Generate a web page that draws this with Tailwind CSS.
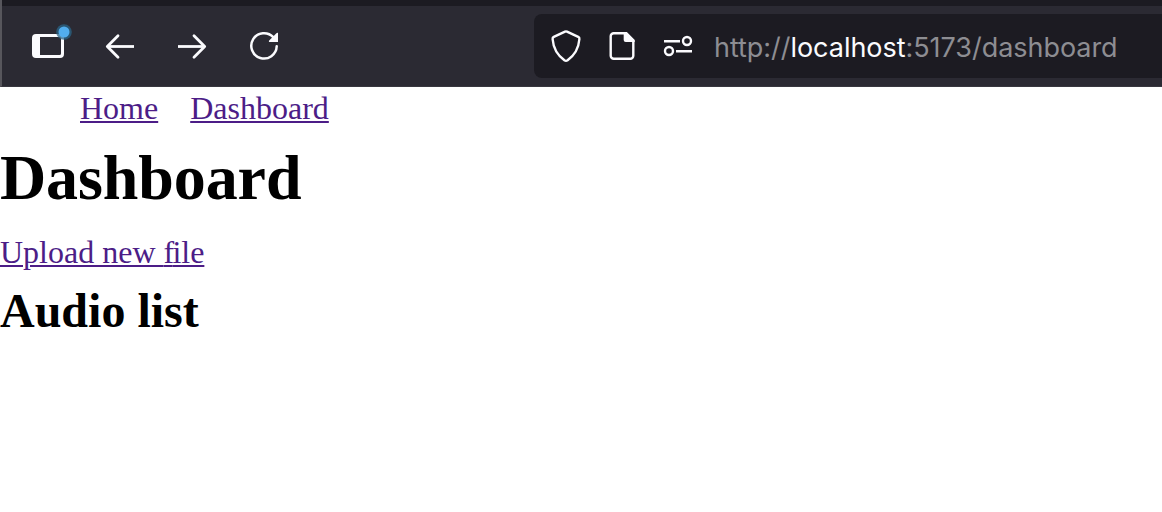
<!DOCTYPE html>
<html lang="en">
<head>
<meta charset="utf-8">
<title>Dashboard</title>
<script src="https://cdn.jsdelivr.net/npm/@tailwindcss/browser@4"></script>
</head>
<body class="h-[512px] w-[1162px] overflow-hidden bg-white">
<header class="h-[87px] border-b border-[#38373f] border-l-2 border-l-[#57565c] bg-[#2b2a33]">
  <div class="h-1.5 bg-[#1c1b22]"></div>
  <div class="flex h-20 items-center">
    <nav class="flex w-[532px] items-center gap-8 pl-[26px]">
      <svg class="h-10 w-10 overflow-visible" viewBox="0 0 40 40" fill="none">
        <path fill="#fbfbfe" fill-rule="evenodd" d="M8 8h24a4 4 0 0 1 4 4v16a4 4 0 0 1-4 4H8a4 4 0 0 1-4-4V12a4 4 0 0 1 4-4ZM12 11v18h19.500a1.500 1.500 0 0 0 1.500-1.500V12.500a1.500 1.500 0 0 0-1.500-1.500Z"/>
        <circle cx="36" cy="6" r="7.800" fill="#2b6487" fill-opacity=".75"/>
        <circle cx="36" cy="6" r="5.500" fill="#52aeef"/>
      </svg>
      <svg class="h-10 w-10" viewBox="0 0 40 40" fill="none" stroke="#fbfbfe" stroke-width="2.800" stroke-linecap="round" stroke-linejoin="round"><path stroke-linecap="butt" d="M34 20.500H8"/><path d="M18 9.800 7.300 20.500 18 31.200"/></svg>
      <svg class="h-10 w-10" viewBox="0 0 40 40" fill="none" stroke="#fbfbfe" stroke-width="2.800" stroke-linecap="round" stroke-linejoin="round"><path stroke-linecap="butt" d="M6 20.500h26"/><path d="m22 9.800 10.700 10.700L22 31.200"/></svg>
      <svg class="h-10 w-10" viewBox="0 0 40 40" fill="none"><path stroke="#fbfbfe" stroke-width="2.500" stroke-linecap="round" d="M32.700 20.300A12.700 12.700 0 1 1 29.300 11.200"/><path fill="#fbfbfe" d="M34 7v9h-8.200c-.9 0-1.300-1-.6-1.600l7.200-7.200c.6-.6 1.600-.8 1.600-.2Z"/></svg>
    </nav>
    <div class="flex h-16 flex-1 items-center rounded-l-lg bg-[#1c1b22] pl-3">
      <svg class="h-10 w-10 shrink-0" viewBox="0 0 40 40" fill="none" stroke="#fbfbfe" stroke-width="2.400" stroke-linejoin="round"><path d="M19 5.600c.6-.3 1.400-.3 2 0l11.200 5.300c.8.400 1.300 1.200 1.200 2.100C32.800 21 29.500 28.500 21.600 34.300c-1 .7-2.200.7-3.200 0C10.500 28.500 7.200 21 6.600 13c-.1-.9.400-1.700 1.200-2.100Z"/></svg>
      <svg class="ml-4 h-10 w-10 shrink-0" viewBox="0 0 40 40" fill="none"><path stroke="#fbfbfe" stroke-width="2.400" stroke-linejoin="round" d="M23 7.200H12.200a3 3 0 0 0-3 3v19.600a3 3 0 0 0 3 3h16.600a3 3 0 0 0 3-3V14.500L24.500 7.200Z" transform="translate(-.5 0)"/><path fill="#fbfbfe" d="M22 6h3L33 14v2H24a2 2 0 0 1-2-2Z" transform="translate(-.3 0)"/></svg>
      <svg class="ml-4 h-10 w-10 shrink-0" viewBox="0 0 40 40" fill="none" stroke="#fbfbfe" stroke-width="2.400"><path d="M6 15.200h16M18 25.200h16"/><circle cx="29" cy="15" r="4"/><circle cx="11" cy="25" r="4"/></svg>
      <div class="ml-4 whitespace-nowrap pt-[3px] font-['Inter',sans-serif] text-[27px] leading-10 tracking-[-0.04px] text-[#8d8d92]">http://<span class="text-[#fbfbfe]">localhost</span>:5173/dashboard</div>
    </div>
  </div>
</header>
<main class="pt-[3px] font-['Liberation_Serif',serif] text-black">
  <nav class="flex gap-8 pl-20 text-[32px] leading-9 text-[#4c1d87]">
    <a class="underline decoration-2 underline-offset-2" href="#">Home</a>
    <a class="underline decoration-2 underline-offset-2" href="#">Dashboard</a>
  </nav>
  <h1 class="mt-4 text-[64px] leading-[72px] font-bold tracking-[-0.1px]">Dashboard</h1>
  <div class="mt-5 text-[32px] leading-9"><a class="text-[#4c1d87] underline decoration-2 underline-offset-2" href="#">Upload new <span class="tracking-[-1.8px]">f</span>ile</a></div>
  <h2 class="mt-3.5 text-[48px] leading-[54px] font-bold">Audio list</h2>
</main>
</body>
</html>
